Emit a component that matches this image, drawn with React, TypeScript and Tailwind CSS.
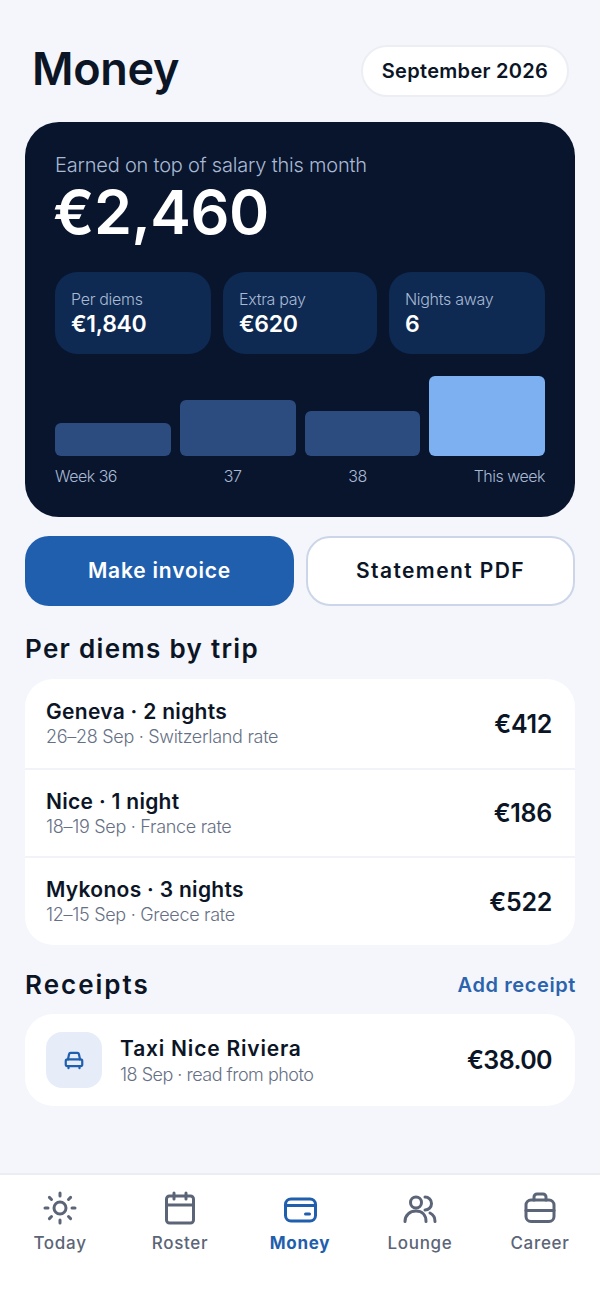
import React from "react";
import { Sun, Calendar } from "lucide-react";

const trips = [
  { title: "Geneva · 2 nights", sub: "26–28 Sep · Switzerland rate", amount: "€412" },
  { title: "Nice · 1 night", sub: "18–19 Sep · France rate", amount: "€186" },
  { title: "Mykonos · 3 nights", sub: "12–15 Sep · Greece rate", amount: "€522" },
];

const stats = [
  { label: "Per diems", value: "€1,840" },
  { label: "Extra pay", value: "€620" },
  { label: "Nights away", value: "6" },
];

const bars = [
  { h: "h-[33px]", color: "bg-[#2c4c80]" },
  { h: "h-[56px]", color: "bg-[#2c4c80]" },
  { h: "h-[45px]", color: "bg-[#2c4c80]" },
  { h: "h-[80px]", color: "bg-[#7cb0f0]" },
];

const WalletIcon = () => (
  <svg width="36" height="36" viewBox="0 0 36 36" fill="none" stroke="currentColor" strokeWidth="3" strokeLinejoin="round" strokeLinecap="round">
    <rect x="3.5" y="9" width="30" height="22" rx="5.5" />
    <path d="M3.5 15.5h30" />
    <path d="M23.5 24h4" />
  </svg>
);

const LoungeIcon = () => (
  <svg width="36" height="36" viewBox="0 0 36 36" fill="none" stroke="currentColor" strokeWidth="3" strokeLinejoin="round" strokeLinecap="round">
    <circle cx="14" cy="12.5" r="5.5" />
    <path d="M3 31.5C3 25 8 21 14 21C20 21 24 25 24 31.5" />
    <path d="M23 7a6.5 6.5 0 0 1 0 13" />
    <path d="M28 23c3 1.500 5 4.500 5 8.500" />
  </svg>
);

const CareerIcon = () => (
  <svg width="36" height="36" viewBox="0 0 36 36" fill="none" stroke="currentColor" strokeWidth="3" strokeLinejoin="round" strokeLinecap="round">
    <rect x="4" y="10" width="28" height="21.500" rx="5" />
    <path d="M4 20.500h28" />
    <path d="M12 10V7a3 3 0 0 1 3-3h6a3 3 0 0 1 3 3v3" />
  </svg>
);

const TaxiIcon = () => (
  <svg width="22" height="22" viewBox="0 0 20 20" fill="none" stroke="currentColor" strokeWidth="2" strokeLinejoin="round" strokeLinecap="round">
    <path d="M4.500 9.500l1-4.800a1.500 1.500 0 0 1 1.500-1.200h6a1.500 1.500 0 0 1 1.500 1.200l1 4.800" />
    <rect x="2.500" y="9.500" width="15" height="6" rx="1.500" />
    <path d="M5 15.500v2M15 15.500v2" />
  </svg>
);

const nav = [
  { label: "Today", icon: <Sun size={36} strokeWidth={2} />, active: false },
  { label: "Roster", icon: <Calendar size={36} strokeWidth={2} />, active: false },
  { label: "Money", icon: <WalletIcon />, active: true },
  { label: "Lounge", icon: <LoungeIcon />, active: false },
  { label: "Career", icon: <CareerIcon />, active: false },
];

export default function App() {
  return (
    <div className="w-[600px] h-[1298px] flex flex-col bg-[#f4f6fb] text-[#0b1526] font-['Inter',sans-serif] overflow-hidden">
      <div className="flex items-start justify-between pt-[45px] pl-[32px] pr-[31px]">
        <h1 className="text-[45px] leading-[48px] font-semibold tracking-[-0.3px]">Money</h1>
        <div className="h-[52px] w-[208px] flex items-center justify-center rounded-full bg-white border-2 border-[#eceef3] text-[20px] font-semibold tracking-[0.3px]">
          September 2026
        </div>
      </div>

      <div className="mx-[25px] mt-[25px] h-[395px] rounded-[34px] bg-[#08152d] px-[30px] pt-[30px]">
        <div className="text-[20px] leading-[26px] font-light text-[#a9b9d4] tracking-[-0.2px]">Earned on top of salary this month</div>
        <div className="text-[61px] leading-[60px] font-semibold text-white tracking-[-0.5px] mt-[4px] -ml-[2px]">€2,460</div>
        <div className="grid grid-cols-[156px_154px_156px] gap-[12px] mt-[30px]">
          {stats.map((s) => (
            <div key={s.label} className="h-[82px] rounded-[22px] bg-[#0e2a52] pl-[16px] pt-[16px]">
              <div className="text-[16px] leading-[22px] font-light text-[#a9b9d4] tracking-[-0.3px]">{s.label}</div>
              <div className="text-[23px] leading-[28px] font-semibold text-white tracking-[-0.3px]">{s.value}</div>
            </div>
          ))}
        </div>
        <div className="flex items-end gap-[9px] h-[80px] mt-[22px]">
          {bars.map((b, i) => (
            <div key={i} className={`flex-1 rounded-[6px] ${b.h} ${b.color}`} />
          ))}
        </div>
        <div className="flex justify-between mt-[9px] text-[16px] leading-[22px] font-light text-[#a9b9d4] tracking-[-0.5px]">
          <span>Week 36</span>
          <span>37</span>
          <span>38</span>
          <span>This week</span>
        </div>
      </div>

      <div className="grid grid-cols-2 gap-[12px] mx-[25px] mt-[19px]">
        <button className="h-[70px] rounded-[24px] bg-[#1f5fae] text-white text-[21px] font-semibold tracking-[0.8px]">Make invoice</button>
        <button className="h-[70px] rounded-[24px] bg-white border-2 border-[#ccd6e8] text-[21px] font-semibold tracking-[1.4px]">Statement PDF</button>
      </div>

      <h2 className="mx-[25px] mt-[27px] text-[26px] leading-[32px] font-semibold tracking-[1.300px]">Per diems by trip</h2>

      <div className="mx-[25px] mt-[14px] rounded-[28px] bg-white overflow-hidden">
        {trips.map((t, i) => (
          <div key={t.title} className={`h-[88.5px] pt-[2px] flex items-center justify-between pl-[21px] pr-[23px] ${i > 0 ? "border-t-2 border-[#f1f3f8]" : ""}`}>
            <div>
              <div className="text-[21px] leading-[26px] font-semibold tracking-[0.3px]">{t.title}</div>
              <div className="text-[18px] leading-[24px] font-light text-[#667085] tracking-[-0.3px]">{t.sub}</div>
            </div>
            <div className="text-[25px] font-semibold tracking-[-0.3px]">{t.amount}</div>
          </div>
        ))}
      </div>

      <div className="flex items-center justify-between mx-[25px] mt-[24px]">
        <h2 className="text-[26px] leading-[32px] font-semibold tracking-[2px]">Receipts</h2>
        <span className="text-[20px] font-semibold text-[#2b63ad] tracking-[0.6px] -mr-[1px]">Add receipt</span>
      </div>

      <div className="mx-[25px] mt-[13px] h-[92px] rounded-[28px] bg-white flex items-center pl-[21px] pr-[23px]">
        <div className="w-[56px] h-[56px] rounded-[16px] bg-[#e6edf8] flex items-center justify-center text-[#1f5fae]">
          <TaxiIcon />
        </div>
        <div className="ml-[18px] flex-1 pt-[3px]">
          <div className="text-[21px] leading-[26px] font-semibold tracking-[0.8px]">Taxi Nice Riviera</div>
          <div className="text-[18px] leading-[25px] font-light text-[#667085] tracking-[-0.5px]">18 Sep · read from photo</div>
        </div>
        <div className="text-[25px] font-semibold tracking-[-0.6px] pt-[2px]">€38.00</div>
      </div>

      <div className="mt-auto h-[125px] bg-white border-t-2 border-[#ebedf2] flex pt-[15px]">
        {nav.map((n) => (
          <div key={n.label} className={`flex-1 flex flex-col items-center ${n.active ? "text-[#1f5fae]" : "text-[#5b6577]"}`}>
            {n.icon}
            <span className={`mt-[6px] text-[17px] leading-[22px] tracking-[0.7px] ${n.active ? "font-bold" : "font-medium"}`}>{n.label}</span>
          </div>
        ))}
      </div>
    </div>
  );
}
